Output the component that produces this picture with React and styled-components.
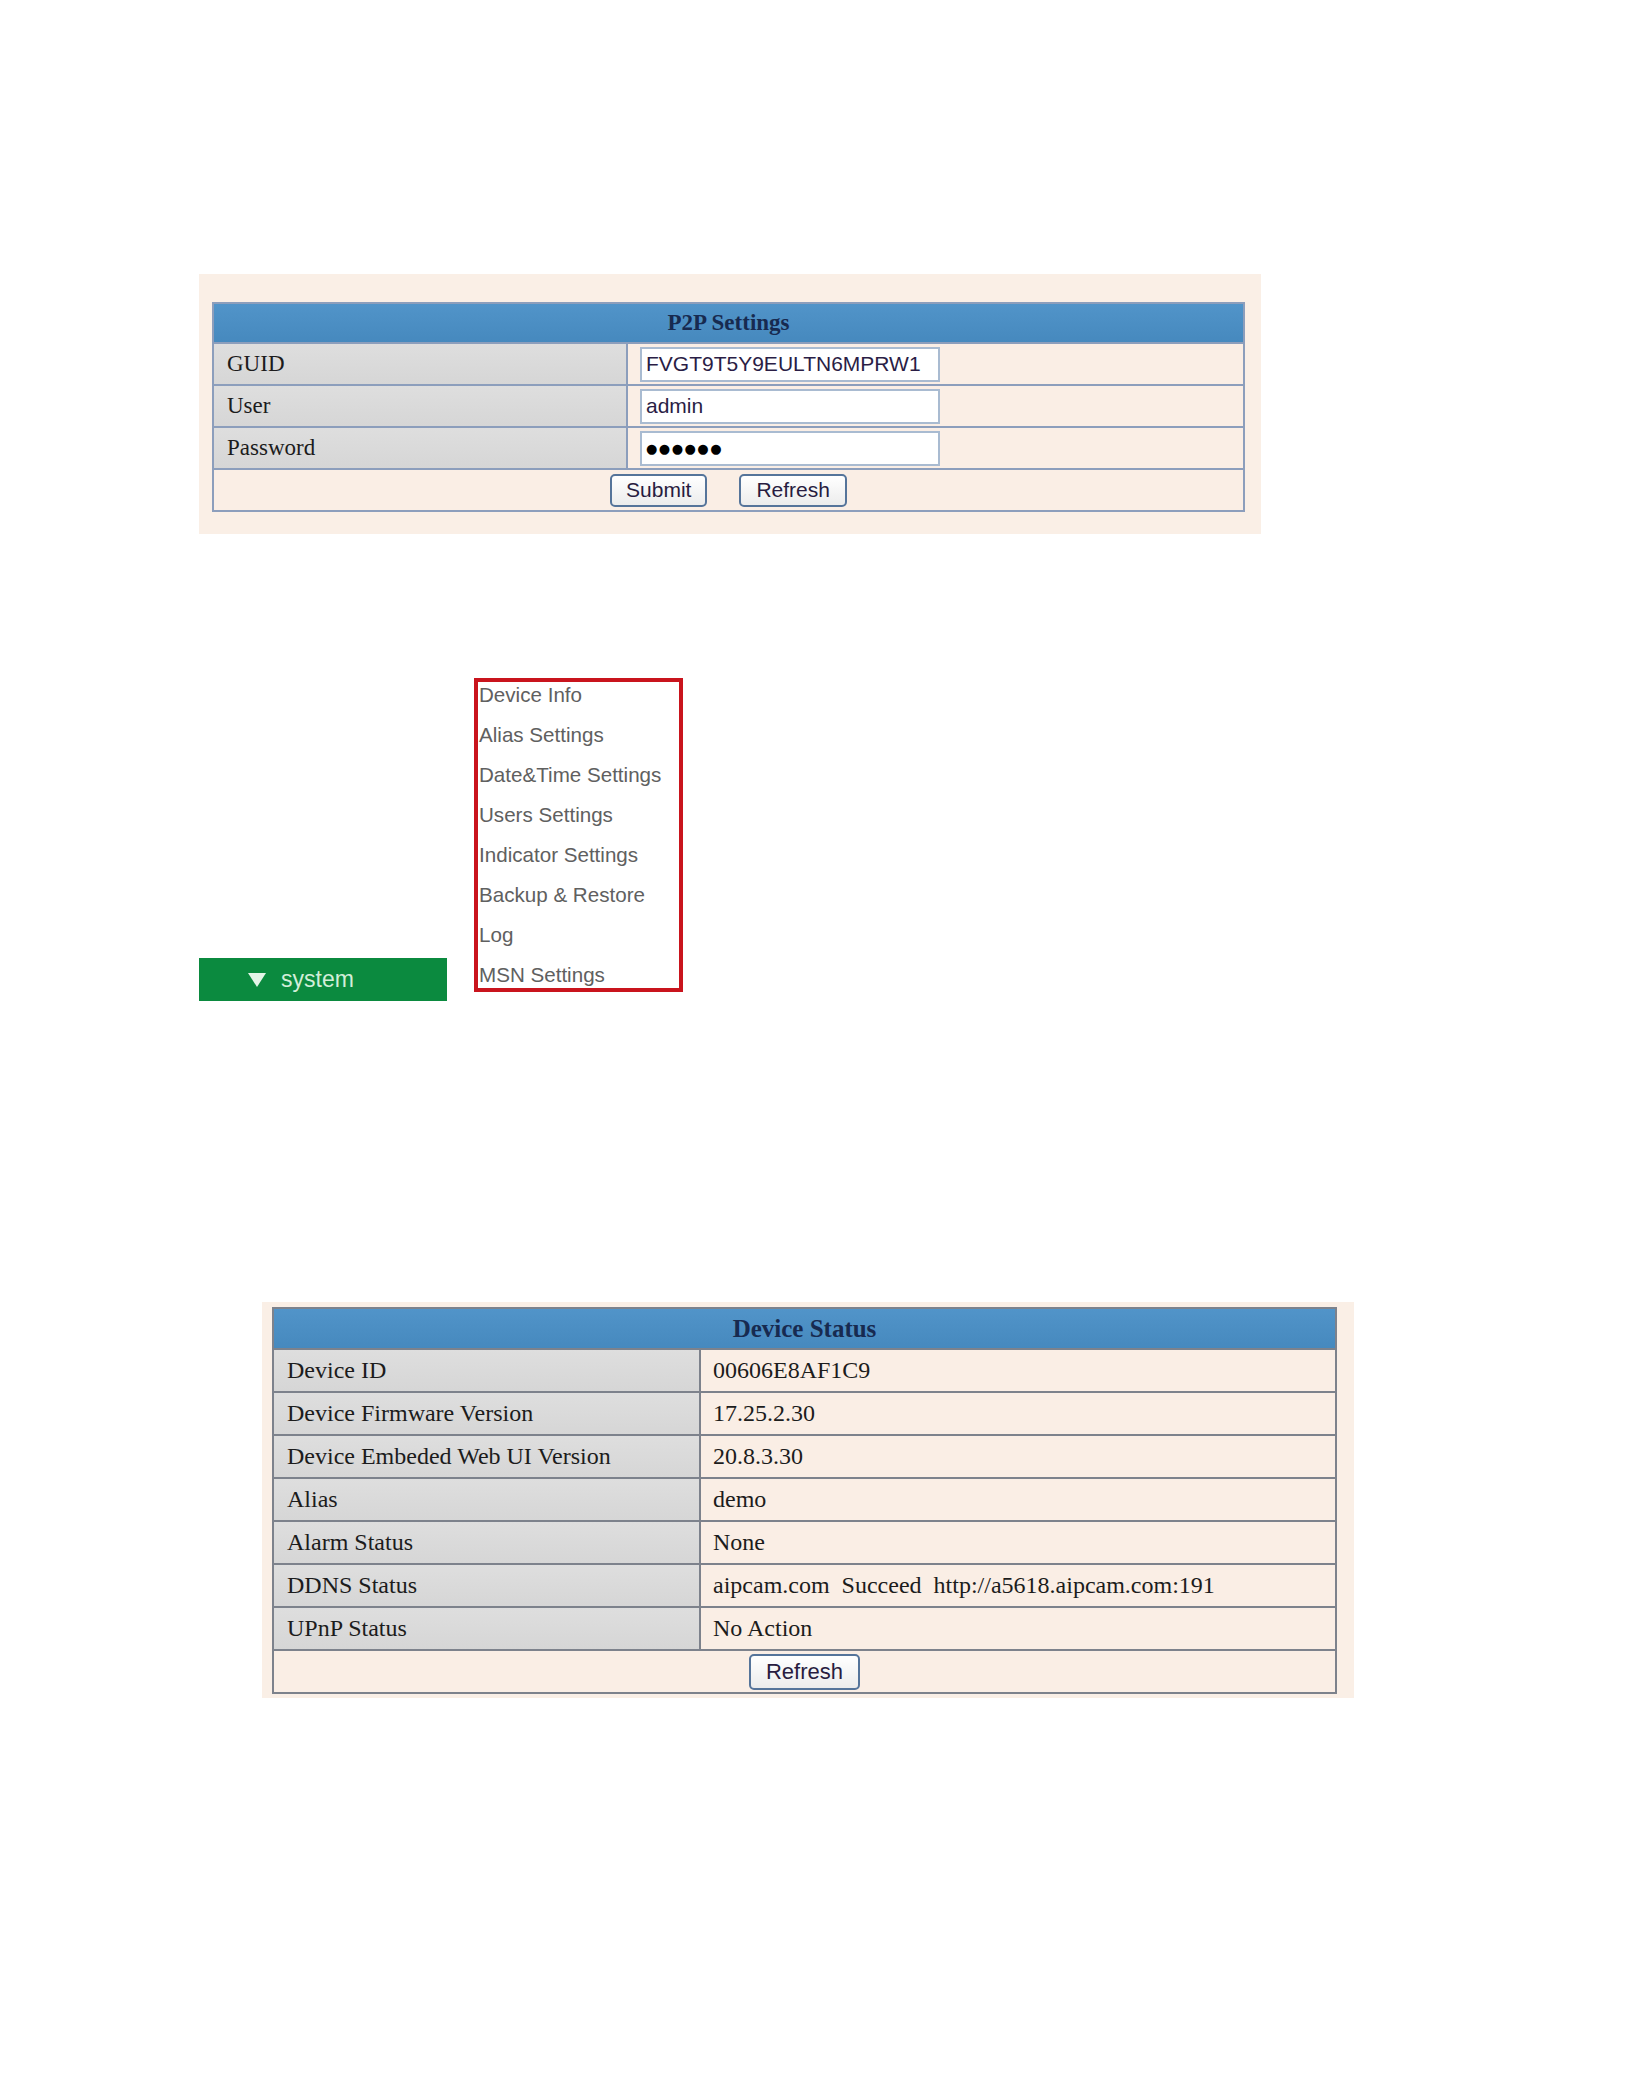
import styled, { createGlobalStyle } from 'styled-components';

const GlobalStyle = createGlobalStyle`
  html, body {
    margin: 0;
    padding: 0;
    background: #ffffff;
  }
  body {
    font-family: 'Liberation Serif', 'Times New Roman', serif;
  }
`;

const p2pRows = [
  { label: 'GUID', value: 'FVGT9T5Y9EULTN6MPRW1' },
  { label: 'User', value: 'admin' },
  { label: 'Password', value: '●●●●●●', dots: true },
];

const statusRows = [
  { label: 'Device ID', value: '00606E8AF1C9' },
  { label: 'Device Firmware Version', value: '17.25.2.30' },
  { label: 'Device Embeded Web UI Version', value: '20.8.3.30' },
  { label: 'Alias', value: 'demo' },
  { label: 'Alarm Status', value: 'None' },
  { label: 'DDNS Status', value: 'aipcam.com  Succeed  http://a5618.aipcam.com:191' },
  { label: 'UPnP Status', value: 'No Action' },
];

const systemMenu = [
  'Device Info',
  'Alias Settings',
  'Date&Time Settings',
  'Users Settings',
  'Indicator Settings',
  'Backup & Restore',
  'Log',
  'MSN Settings',
];

export default function App() {
  return (
    <>
      <GlobalStyle />
      <Page>
        <Panel $left={199} $width={1062} $pad="28px 16px 22px 13px">
          <Table $line="#8c9ebc">
            <Header $h={38} $size={23}>P2P Settings</Header>
            {p2pRows.map(row => (
              <Row key={row.label} $h={40} $label={414} $line="#8c9ebc">
                <Label $size={23} $line="#8c9ebc">{row.label}</Label>
                <Value>
                  <Field defaultValue={row.value} $dots={row.dots} />
                </Value>
              </Row>
            ))}
            <ButtonRow $h={40} $gap={32} $line="#8c9ebc">
              <Button $size={21} $h={33}>Submit</Button>
              <Button $size={21} $h={33} $wide>Refresh</Button>
            </ButtonRow>
          </Table>
        </Panel>

        <MenuArea>
          <SystemBar>
            <svg width="18" height="14" viewBox="0 0 18 14">
              <polygon points="0,0 18,0 9,14" fill="#e4f5e8" />
            </svg>
            <span>system</span>
          </SystemBar>
          <MenuBox>
            {systemMenu.map(item => (
              <MenuItem key={item}>{item}</MenuItem>
            ))}
          </MenuBox>
        </MenuArea>

        <Panel $left={262} $width={1092} $pad="5px 17px 4px 10px" $top={301}>
          <Table $line="#7d828c">
            <Header $h={39} $size={25}>Device Status</Header>
            {statusRows.map(row => (
              <Row key={row.label} $h={41} $label={427} $line="#7d828c">
                <Label $size={24} $line="#7d828c">{row.label}</Label>
                <StatusValue>{row.value}</StatusValue>
              </Row>
            ))}
            <ButtonRow $h={41} $gap={0} $line="#7d828c">
              <Button $size={22} $h={36} $wide>Refresh</Button>
            </ButtonRow>
          </Table>
        </Panel>
      </Page>
    </>
  );
}

const Page = styled.div`
  display: flex;
  flex-direction: column;
  align-items: flex-start;
  padding-top: 274px;
`;

const Panel = styled.div`
  box-sizing: border-box;
  margin-left: ${p => p.$left}px;
  margin-top: ${p => p.$top || 0}px;
  width: ${p => p.$width}px;
  padding: ${p => p.$pad};
  background: #faefe6;
`;

const Table = styled.div`
  border: 2px solid ${p => p.$line};
  background: #faeee5;
`;

const Header = styled.div`
  height: ${p => p.$h}px;
  display: flex;
  align-items: center;
  justify-content: center;
  background: linear-gradient(#5194c9, #4689be);
  color: #172a50;
  font-size: ${p => p.$size}px;
  font-weight: bold;
`;

const Row = styled.div`
  display: grid;
  grid-template-columns: ${p => p.$label}px 1fr;
  height: ${p => p.$h}px;
  border-top: 2px solid ${p => p.$line};
`;

const Label = styled.div`
  box-sizing: border-box;
  display: flex;
  align-items: center;
  padding-left: 13px;
  background: linear-gradient(#dedede, #d6d6d6);
  border-right: 2px solid ${p => p.$line};
  color: #1c1c1c;
  font-size: ${p => p.$size}px;
`;

const Value = styled.div`
  display: flex;
  align-items: center;
  padding-left: 12px;
`;

const StatusValue = styled.div`
  display: flex;
  align-items: center;
  padding-left: 12px;
  color: #1c1c1c;
  font-size: 24px;
  white-space: pre;
`;

const Field = styled.input`
  box-sizing: border-box;
  width: 300px;
  height: 35px;
  padding: 0 4px;
  margin: 0;
  border: 2px solid #a9bbd1;
  background: #ffffff;
  color: ${p => (p.$dots ? '#000000' : '#2a1d45')};
  font-family: ${p => (p.$dots ? "'DejaVu Sans'" : "'Liberation Sans', Arial")}, sans-serif;
  font-size: ${p => (p.$dots ? 13 : 21)}px;
  letter-spacing: ${p => (p.$dots ? '1.5px' : '0')};
  outline: none;
`;

const ButtonRow = styled.div`
  height: ${p => p.$h}px;
  display: flex;
  align-items: center;
  justify-content: center;
  gap: ${p => p.$gap}px;
  border-top: 2px solid ${p => p.$line};
`;

const Button = styled.button`
  height: ${p => p.$h}px;
  padding: 0 ${p => (p.$wide ? 15 : 14)}px;
  border: 2px solid #55749a;
  border-radius: 5px;
  background: linear-gradient(#ffffff, #ececec);
  color: #281c40;
  font-family: 'Liberation Sans', Arial, sans-serif;
  font-size: ${p => p.$size}px;
  cursor: pointer;
`;

const MenuArea = styled.div`
  display: flex;
  align-items: flex-end;
  gap: 27px;
  margin-top: 144px;
  margin-left: 199px;
`;

const SystemBar = styled.div`
  box-sizing: border-box;
  width: 248px;
  height: 43px;
  display: flex;
  align-items: center;
  gap: 15px;
  padding-left: 49px;
  background: #0b8a3f;
  color: #d2eed9;
  font-family: 'Liberation Sans', Arial, sans-serif;
  font-size: 23px;
`;

const MenuBox = styled.div`
  box-sizing: border-box;
  width: 209px;
  height: 314px;
  margin-bottom: 9px;
  padding-left: 1px;
  display: flex;
  flex-direction: column;
  gap: 14px;
  border: 4px solid #c9141d;
  background: #ffffff;
  overflow: hidden;
`;

const MenuItem = styled.div`
  line-height: 26px;
  color: #606060;
  font-family: 'Liberation Sans', Arial, sans-serif;
  font-size: 20.6px;
  white-space: nowrap;
`;
